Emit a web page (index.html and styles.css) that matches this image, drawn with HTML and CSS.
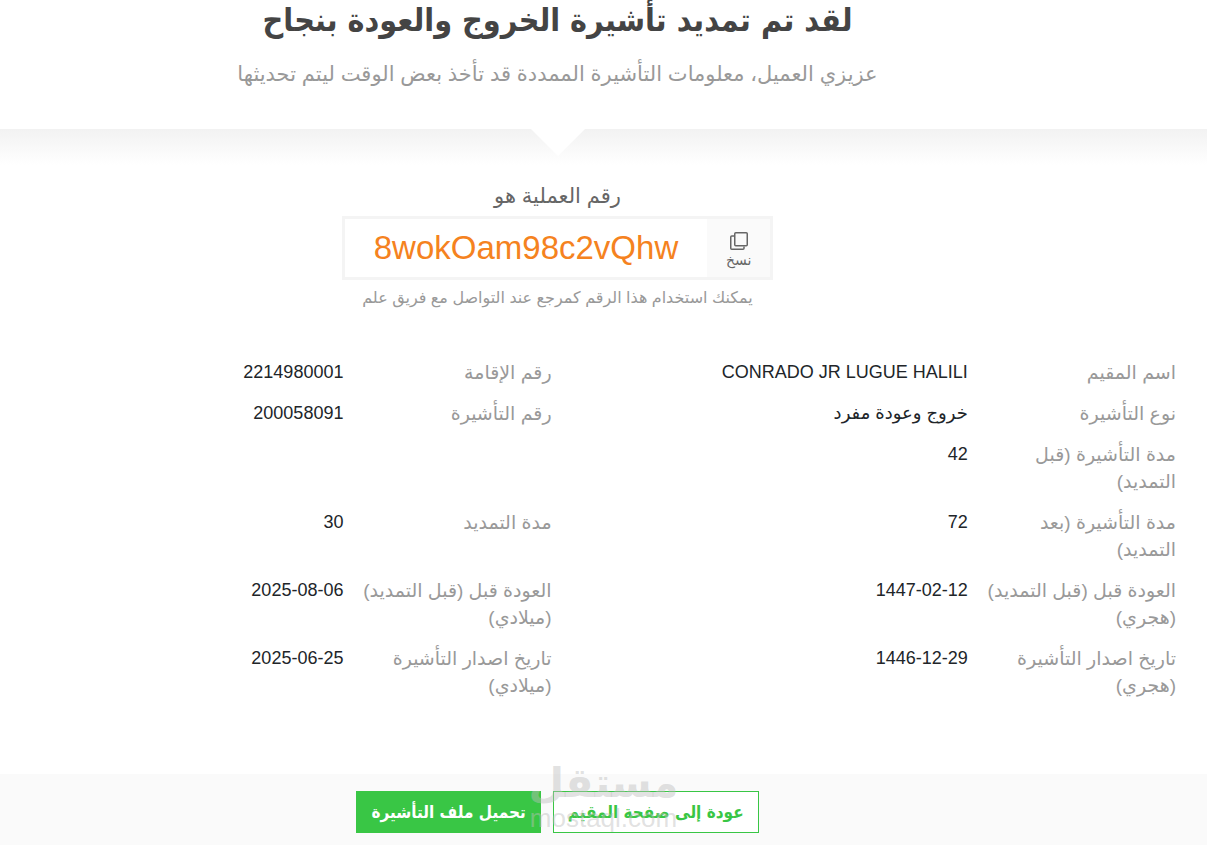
FILE: index.html
```html
<!DOCTYPE html>
<html lang="ar" dir="rtl">
<head>
  <meta charset="UTF-8">
  <meta name="viewport" content="width=device-width, initial-scale=1.0">
  <title>تمديد تأشيرة الخروج والعودة</title>
  <link rel="stylesheet" href="styles.css">
</head>
<body>
  <header class="page-header">
    <h1>لقد تم تمديد تأشيرة الخروج والعودة بنجاح</h1>
    <p>عزيزي العميل، معلومات التأشيرة الممددة قد تأخذ بعض الوقت ليتم تحديثها</p>
  </header>

  <div class="divider">
    <svg width="54" height="27" viewBox="0 0 54 27" aria-hidden="true"><path d="M0 0h54L27 27z" fill="#fff"/></svg>
  </div>

  <section class="reference">
    <h2>رقم العملية هو</h2>
    <div class="reference-box">
      <button type="button" class="copy-button">
        <svg width="18" height="18" viewBox="0 0 18 18" fill="none" stroke="#666" aria-hidden="true">
          <rect x="4.750" y="0.750" width="12.500" height="13" rx="1" stroke-width="1.500"/>
          <path d="M4 4H1.750q-1 0-1 1v11.250q0 1 1 1H13q1 0 1-1V14.500" stroke-width="1.500"/>
        </svg>
        نسخ
      </button>
      <span class="reference-code" dir="ltr">8wokOam98c2vQhw</span>
    </div>
    <p class="note">يمكنك استخدام هذا الرقم كمرجع عند التواصل مع فريق علم</p>
  </section>

  <dl class="details">
    <dt>اسم المقيم</dt>
    <dd><bdi>CONRADO JR LUGUE HALILI</bdi></dd>
    <dt>رقم الإقامة</dt>
    <dd>2214980001</dd>

    <dt>نوع التأشيرة</dt>
    <dd>خروج وعودة مفرد</dd>
    <dt>رقم التأشيرة</dt>
    <dd>200058091</dd>

    <dt>مدة التأشيرة (قبل التمديد)</dt>
    <dd class="wide">42</dd>

    <dt>مدة التأشيرة (بعد التمديد)</dt>
    <dd>72</dd>
    <dt>مدة التمديد</dt>
    <dd>30</dd>

    <dt>العودة قبل (قبل التمديد) (هجري)</dt>
    <dd><bdi dir="ltr">1447-02-12</bdi></dd>
    <dt>العودة قبل (قبل التمديد) (ميلادي)</dt>
    <dd><bdi dir="ltr">2025-08-06</bdi></dd>

    <dt>تاريخ اصدار التأشيرة (هجري)</dt>
    <dd><bdi dir="ltr">1446-12-29</bdi></dd>
    <dt>تاريخ اصدار التأشيرة (ميلادي)</dt>
    <dd><bdi dir="ltr">2025-06-25</bdi></dd>
  </dl>

  <footer class="actions">
    <button type="button" class="btn btn-outline">عودة إلى صفحة المقيم</button>
    <button type="button" class="btn btn-primary">تحميل ملف التأشيرة</button>
    <div class="watermark">
      <span class="watermark-name">مستقل</span>
      <span class="watermark-site" dir="ltr">mostaql.com</span>
    </div>
  </footer>
</body>
</html>
```
FILE: styles.css
```css
* {
  box-sizing: border-box;
}
body {
  margin: 0;
  display: flex;
  flex-direction: column;
  min-height: 100vh;
  font-family: "Liberation Sans", "DejaVu Sans", sans-serif;
  font-size: 18px;
  line-height: 27px;
  color: #212529;
  background-color: #fff;
}
h1, h2, p, dl, dd {
  margin: 0;
}
.page-header,
.divider,
.reference,
.actions {
  padding-right: 92px;
  text-align: center;
}
.page-header {
  padding-bottom: 42px;
}
.page-header h1 {
  font-family: "DejaVu Sans Condensed", "DejaVu Sans", sans-serif;
  font-size: 32px;
  line-height: 40px;
  color: #444;
}
.page-header p {
  margin-top: 20px;
  font-size: 21px;
  color: #999;
}
.divider {
  display: flex;
  justify-content: center;
  height: 36px;
  background: linear-gradient(#f2f2f2, #fff);
}
.reference {
  display: flex;
  flex-direction: column;
  align-items: center;
  padding-top: 17px;
}
.reference h2 {
  font-size: 21px;
  font-weight: normal;
  color: #666;
}
.reference-box {
  display: flex;
  margin-top: 7px;
  border: 3px solid #f4f4f4;
}
.copy-button {
  display: flex;
  flex-direction: column;
  align-items: center;
  justify-content: center;
  width: 63px;
  height: 58px;
  padding: 5px 0 0;
  border: none;
  background-color: #fafafa;
  font-family: inherit;
  font-size: 14px;
  line-height: 20px;
  color: #666;
  cursor: pointer;
}
.reference-code {
  padding: 0 29px;
  font-size: 33px;
  line-height: 58px;
  color: #f58220;
}
.note {
  margin-top: 4px;
  font-size: 16px;
  color: #999;
}
.details {
  display: grid;
  grid-template-columns: 2fr 4fr 2fr 3.3fr;
  row-gap: 14px;
  margin-top: 48px;
  padding-right: 31px;
}
.details dt {
  padding-left: 15px;
  font-size: 19px;
  color: #999;
}
.details .wide {
  grid-column: span 3;
}
.actions {
  position: relative;
  display: flex;
  justify-content: center;
  gap: 12px;
  margin-top: auto;
  padding-top: 17px;
  padding-bottom: 12px;
  background-color: #fafafa;
}
.btn {
  height: 42px;
  padding: 0 14px;
  border: 1px solid #39c645;
  font-family: "DejaVu Sans Condensed", "DejaVu Sans", sans-serif;
  font-size: 17px;
  font-weight: bold;
  cursor: pointer;
}
.btn-outline {
  background-color: #fff;
  color: #39c645;
}
.btn-primary {
  background-color: #39c645;
  color: #fff;
}
.watermark {
  position: absolute;
  left: 50%;
  bottom: 14px;
  transform: translateX(-50%);
  display: flex;
  flex-direction: column;
  align-items: center;
  color: rgba(190, 190, 190, 0.45);
  pointer-events: none;
}
.watermark-name {
  font-size: 41px;
  font-weight: bold;
  line-height: 44px;
}
.watermark-site {
  font-size: 26px;
  line-height: 26px;
}
```
